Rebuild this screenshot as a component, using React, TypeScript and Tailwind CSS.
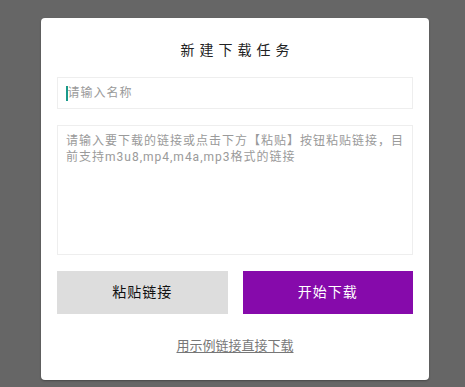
import React from "react";

const font = { fontFamily: "Roboto, 'Noto Sans CJK SC', sans-serif" };

export default function App() {
  return (
    <div className="h-screen w-full overflow-hidden bg-[#666666] pt-[18px]" style={font}>
      <div className="ml-[41px] flex w-[388px] flex-col rounded-[4px] bg-white px-4 pb-[24px] pt-[22px] shadow-[0_1px_2px_rgba(0,0,0,0.3)]">
        <h2 className="pl-[5px] text-center text-[14px] leading-5 tracking-[5px] text-[#222]">新建下载任务</h2>
        <div className="mt-[17px] flex h-8 items-center border border-[#eeeeee] pl-[8px]">
          <span className="h-[15px] w-[1.5px] bg-[#1a9a8a]" />
          <span className="text-[12px] tracking-[1px] text-[#9a9a9a]">请输入名称</span>
        </div>
        <div className="mt-4 h-[130px] border border-[#eeeeee] px-[8px] pt-[7px] text-[12px] leading-4 tracking-[1px] text-[#9a9a9a]">
          请输入要下载的链接或点击下方【粘贴】按钮粘贴链接，目前支持m3u8,mp4,m4a,mp3格式的链接
        </div>
        <div className="mt-4 flex h-[43px] gap-[15px]">
          <button className="flex-1 bg-[#dddddd] text-[14px] tracking-[1px] text-[#111]">粘贴链接</button>
          <button className="flex-1 bg-[#860aab] text-[14px] tracking-[1px] text-white">开始下载</button>
        </div>
        <a className="mt-[22px] self-center text-[13px] leading-5 text-[#777] underline underline-offset-2">
          用示例链接直接下载
        </a>
      </div>
    </div>
  );
}
